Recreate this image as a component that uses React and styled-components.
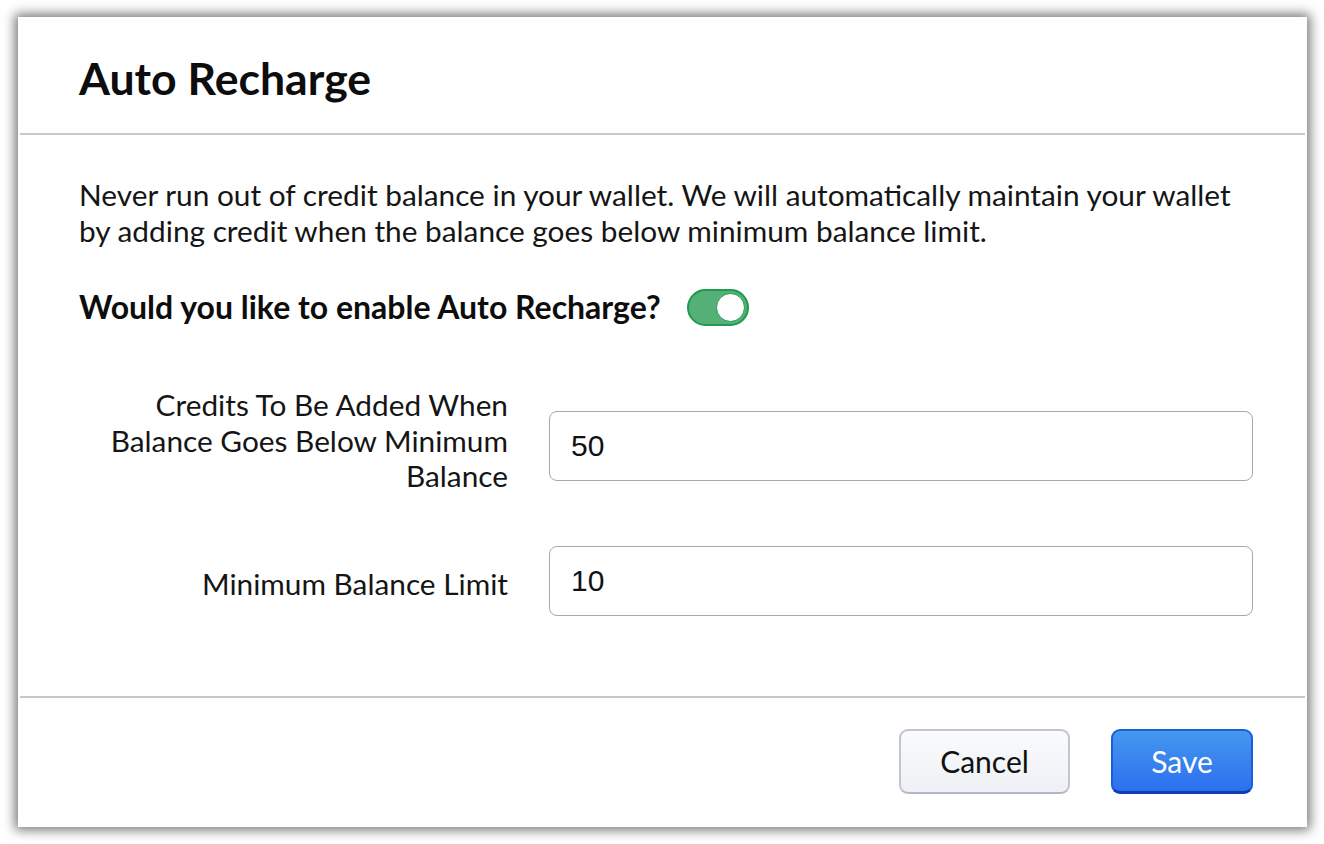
import React, { useState } from 'react'
import styled, { createGlobalStyle } from 'styled-components'

const GlobalStyle = createGlobalStyle`
  html, body {
    margin: 0;
    padding: 0;
    background: #ffffff;
  }
  body {
    font-family: Lato, "Noto Sans", sans-serif;
    color: #111;
  }
`

const Page = styled.div`
  width: 1324px;
  height: 844px;
  padding: 17px 17px 17px 18px;
  box-sizing: border-box;
`

const Dialog = styled.div`
  width: 1289px;
  height: 810px;
  background: #fff;
  box-shadow: 0 0 11px 3px rgba(0, 0, 0, 0.55);
  display: flex;
  flex-direction: column;
`

const Header = styled.div`
  height: 116px;
  display: flex;
  align-items: center;
  padding: 0 59px;
  border-bottom: 2px solid #c8c8c8;
  margin: 0 2px;
`

const Title = styled.h1`
  margin: 0;
  font-size: 44.6px;
  font-weight: 700;
  color: #0d0d0d;
  padding-top: 4px;
`

const Body = styled.div`
  flex: 1;
  padding: 42px 54px 0 61px;
`

const Intro = styled.p`
  margin: 0;
  font-size: 29.8px;
  line-height: 36px;
  color: #151515;
  white-space: nowrap;
`

const Question = styled.div`
  margin-top: 38px;
  display: flex;
  align-items: center;
  gap: 26px;
  font-size: 32px;
  font-weight: 700;
  color: #0d0d0d;
  white-space: nowrap;
`

const Toggle = styled.button`
  width: 62px;
  height: 37px;
  border-radius: 19px;
  border: 2px solid #1f9a4f;
  background: ${p => (p.on ? '#55b078' : '#ccc')};
  padding: 0;
  position: relative;
  cursor: pointer;
  margin-top: 2px;
  flex-shrink: 0;
`

const Knob = styled.span`
  position: absolute;
  top: 2px;
  left: ${p => (p.on ? '27px' : '2px')};
  width: 29px;
  height: 29px;
  border-radius: 50%;
  background: #fff;
  border: 1px solid #1f9a4f;
  box-sizing: border-box;
`

const Form = styled.div`
  margin-top: 61px;
  display: grid;
  grid-template-columns: 429px 1fr;
  column-gap: 41px;
  row-gap: 40px;
  align-items: center;
`

const Label = styled.label`
  text-align: right;
  font-size: 29.8px;
  line-height: 35.5px;
  color: #151515;
  white-space: nowrap;
  padding-top: ${p => p.$top || 0}px;
  padding-bottom: ${p => p.$bottom || 0}px;
`

const Input = styled.input`
  height: 70px;
  box-sizing: border-box;
  border: 1.5px solid #a8a8ae;
  border-radius: 8px;
  padding: 0 21px;
  font-family: "Liberation Sans", Arial, sans-serif;
  font-size: 30px;
  color: #111;
  outline: none;
  width: 100%;
`

const Footer = styled.div`
  height: 131px;
  border-top: 2px solid #c8c8c8;
  margin: 0 2px;
  display: flex;
  justify-content: flex-end;
  align-items: center;
  padding: 0 52px 3px 0;
  gap: 41px;
  box-sizing: border-box;
`

const Button = styled.button`
  height: 65px;
  border-radius: 9px;
  font-family: Lato, "Noto Sans", sans-serif;
  font-size: 30px;
  cursor: pointer;
  padding: 0;
  width: ${p => p.w}px;
  color: ${p => (p.primary ? '#fff' : '#111')};
  border: 2px solid ${p => (p.primary ? '#1a5fd6' : '#c2c4cf')};
  border-bottom-width: ${p => (p.primary ? '3px' : '2px')};
  border-bottom-color: ${p => (p.primary ? '#0d3fb0' : '#b5b7c4')};
  background: ${p =>
    p.primary
      ? 'linear-gradient(#4597ee, #2c6ff0)'
      : 'linear-gradient(#fafbfd, #eef0f5)'};
`

export default function App () {
  const [on, setOn] = useState(true)
  return (
    <Page>
      <GlobalStyle />
      <Dialog>
        <Header>
          <Title>Auto Recharge</Title>
        </Header>
        <Body>
          <Intro>
            Never run out of credit balance in your wallet. We will automatically maintain your wallet
            <br />
            by adding credit when the balance goes below minimum balance limit.
          </Intro>
          <Question>
            Would you like to enable Auto Recharge?
            <Toggle on={on ? 1 : 0} onClick={() => setOn(!on)}>
              <Knob on={on ? 1 : 0} />
            </Toggle>
          </Question>
          <Form>
            <Label $bottom={12}>
              Credits To Be Added When
              <br />
              Balance Goes Below Minimum
              <br />
              Balance
            </Label>
            <Input defaultValue='50' />
            <Label $top={6}>Minimum Balance Limit</Label>
            <Input defaultValue='10' />
          </Form>
        </Body>
        <Footer>
          <Button w={171}>Cancel</Button>
          <Button primary w={142}>Save</Button>
        </Footer>
      </Dialog>
    </Page>
  )
}
